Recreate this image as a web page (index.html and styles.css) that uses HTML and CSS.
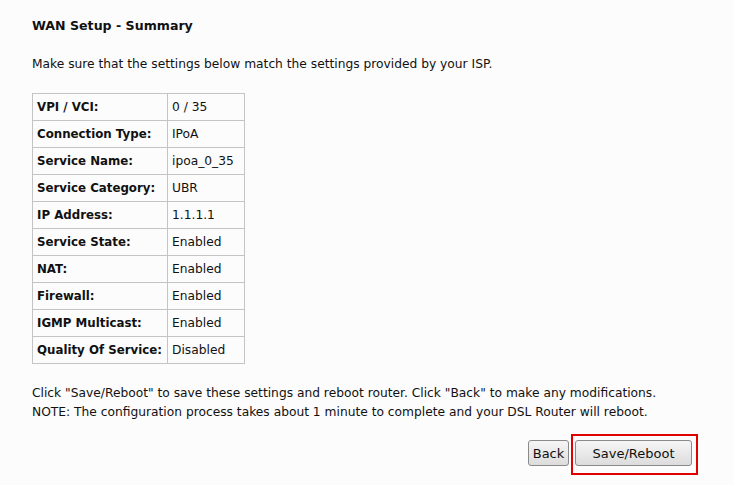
FILE: index.html
```html
<!DOCTYPE html>
<html lang="en">
<head>
  <meta charset="UTF-8" />
  <title>WAN Setup - Summary</title>
  <link rel="stylesheet" href="styles.css">
</head>
<body>
  <div class="page">
    <h1 class="title">WAN Setup - Summary</h1>
    <p class="intro">Make sure that the settings below match the settings provided by your ISP.</p>
    <table class="summary">
      <tr><td class="label">VPI / VCI:</td><td>0 / 35</td></tr>
      <tr><td class="label">Connection Type:</td><td>IPoA</td></tr>
      <tr><td class="label">Service Name:</td><td>ipoa_0_35</td></tr>
      <tr><td class="label">Service Category:</td><td>UBR</td></tr>
      <tr><td class="label">IP Address:</td><td>1.1.1.1</td></tr>
      <tr><td class="label">Service State:</td><td>Enabled</td></tr>
      <tr><td class="label">NAT:</td><td>Enabled</td></tr>
      <tr><td class="label">Firewall:</td><td>Enabled</td></tr>
      <tr><td class="label">IGMP Multicast:</td><td>Enabled</td></tr>
      <tr><td class="label">Quality Of Service:</td><td>Disabled</td></tr>
    </table>
    <p class="note">Click "Save/Reboot" to save these settings and reboot router. Click "Back" to make any modifications.<br>NOTE: The configuration process takes about 1 minute to complete and your DSL Router will reboot.</p>
    <div class="actions">
      <button class="btn btn-back">Back</button>
      <div class="highlight">
        <button class="btn btn-save">Save/Reboot</button>
      </div>
    </div>
  </div>
</body>
</html>
```

FILE: styles.css
```css
body {
  margin: 0;
  background: #fcfcfc;
  color: #111;
  font-family: 'DejaVu Sans', sans-serif;
  font-size: 12.25px;
}
.page {
  padding: 18px 36px 0 32px;
}
.title {
  margin: 0;
  font-size: 12.6px;
  font-weight: bold;
  line-height: 16px;
}
.intro {
  margin: 22px 0 0;
  line-height: 16px;
}
.summary {
  margin-top: 21px;
  border-collapse: collapse;
  border: 1px solid #b4b4b4;
  table-layout: fixed;
}
.summary td {
  border: 1px solid #c4c4c4;
  height: 27px;
  padding: 0 3px 0 4px;
  box-sizing: border-box;
  white-space: nowrap;
  overflow: hidden;
}
.summary td.label {
  width: 135px;
  font-size: 11.8px;
  font-weight: bold;
}
.summary td:last-child {
  width: 77px;
}
.note {
  margin: 20px 0 0;
  line-height: 19px;
}
.actions {
  display: flex;
  justify-content: flex-end;
  align-items: flex-start;
  margin-top: 12px;
}
.btn {
  height: 26px;
  font-family: inherit;
  font-size: 13px;
  color: #111;
  background: linear-gradient(#f6f6f6, #dcdcdc);
  border: 1px solid #8a8a8a;
  border-radius: 3px;
  padding: 0;
}
.btn-back {
  width: 41px;
  margin-top: 6px;
  margin-right: 2px;
}
.highlight {
  border: 2px solid #e00000;
  padding: 4px 4px 7px 2px;
}
.btn-save {
  display: block;
  width: 117px;
}
```
